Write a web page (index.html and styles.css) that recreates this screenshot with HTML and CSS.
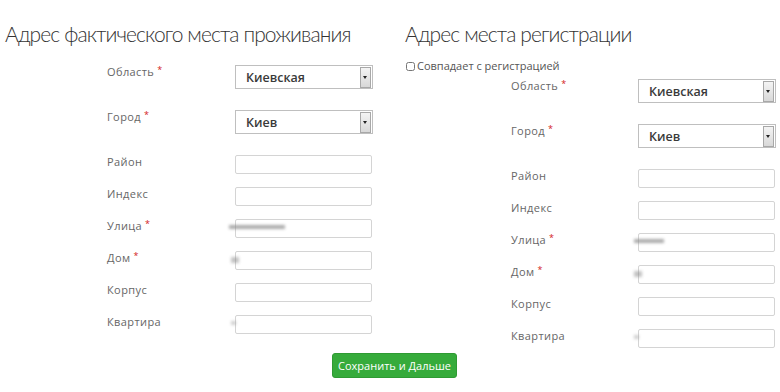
FILE: index.html
```html
<!DOCTYPE html>
<html lang="ru">
<head>
  <meta charset="UTF-8">
  <title>Адрес</title>
  <link rel="stylesheet" href="styles.css">
</head>
<body>
  <div class="columns">
    <div class="col col-live">
      <h2>Адрес фактического места проживания</h2>
      <div class="fields">
        <div class="row row-select">
          <label>Область<span class="req">*</span></label>
          <div class="select"><span>Киевская</span><i class="arrow"></i></div>
        </div>
        <div class="row row-select">
          <label>Город<span class="req">*</span></label>
          <div class="select"><span>Киев</span><i class="arrow"></i></div>
        </div>
        <div class="row">
          <label>Район</label>
          <input type="text">
        </div>
        <div class="row">
          <label>Индекс</label>
          <input type="text">
        </div>
        <div class="row">
          <label>Улица<span class="req">*</span></label>
          <div class="filled"><input type="text"><span class="blur blur-long"></span></div>
        </div>
        <div class="row">
          <label>Дом<span class="req">*</span></label>
          <div class="filled"><input type="text"><span class="blur blur-short"></span></div>
        </div>
        <div class="row">
          <label>Корпус</label>
          <input type="text">
        </div>
        <div class="row">
          <label>Квартира</label>
          <div class="filled"><input type="text"><span class="blur blur-dot"></span></div>
        </div>
      </div>
    </div>

    <div class="col col-reg">
      <h2>Адрес места регистрации</h2>
      <label class="same"><input type="checkbox"> Совпадает с регистрацией</label>
      <div class="fields">
        <div class="row row-select">
          <label>Область<span class="req">*</span></label>
          <div class="select"><span>Киевская</span><i class="arrow"></i></div>
        </div>
        <div class="row row-select">
          <label>Город<span class="req">*</span></label>
          <div class="select"><span>Киев</span><i class="arrow"></i></div>
        </div>
        <div class="row">
          <label>Район</label>
          <input type="text">
        </div>
        <div class="row">
          <label>Индекс</label>
          <input type="text">
        </div>
        <div class="row">
          <label>Улица<span class="req">*</span></label>
          <div class="filled"><input type="text"><span class="blur blur-mid"></span></div>
        </div>
        <div class="row">
          <label>Дом<span class="req">*</span></label>
          <div class="filled"><input type="text"><span class="blur blur-short"></span></div>
        </div>
        <div class="row">
          <label>Корпус</label>
          <input type="text">
        </div>
        <div class="row">
          <label>Квартира</label>
          <div class="filled"><input type="text"><span class="blur blur-dot"></span></div>
        </div>
      </div>
    </div>
  </div>

  <div class="actions">
    <button class="save">Сохранить и Дальше</button>
  </div>
</body>
</html>
```

FILE: styles.css
```css
body {
  margin: 0;
  background-color: #fff;
  font-family: "Open Sans", Arial, sans-serif;
  color: #444;
}
.columns {
  display: flex;
  padding-top: 21px;
}
.col {
  box-sizing: border-box;
}
.col-live {
  width: 400px;
  padding-left: 5px;
}
.col-reg {
  flex: 1;
  padding-left: 5px;
}
h2 {
  margin: 0;
  font-family: "Lato", Arial, sans-serif;
  font-weight: 300;
  font-size: 21px;
  letter-spacing: -0.9px;
  line-height: 26px;
  color: #333;
}
.col-live .fields {
  margin-top: 18px;
  margin-left: 102px;
}
.col-reg .fields {
  margin-top: 5px;
  margin-left: 106px;
}
.same {
  display: flex;
  align-items: center;
  margin-top: 11px;
  font-size: 11px;
  line-height: 16px;
  color: #555;
}
.same input {
  margin: 0 2px 0 1px;
  width: 9px;
  height: 9px;
}
.row {
  display: flex;
  align-items: flex-start;
  margin-bottom: 13px;
}
.row:last-child {
  margin-bottom: 0;
}
.row-select {
  margin-bottom: 21px;
}
.row label {
  width: 128px;
  font-size: 11px;
  letter-spacing: 0.4px;
  line-height: 14px;
  color: #666;
}
.col-reg .row label {
  width: 127px;
}
.req {
  color: #d32020;
  font-size: 9px;
  position: relative;
  top: -3px;
  margin-left: 3px;
}
.select {
  box-sizing: border-box;
  width: 138px;
  height: 24px;
  border: 1px solid #bfbfbf;
  display: flex;
  align-items: center;
  justify-content: space-between;
  padding-left: 10px;
  font-size: 12.5px;
  font-weight: 600;
  color: #3a3a3a;
}
.arrow {
  width: 9px;
  height: 19px;
  margin-right: 1px;
  border: 1px solid #a8a8a8;
  background: linear-gradient(#f4f4f4, #d8d8d8);
  position: relative;
}
.arrow:after {
  content: "";
  position: absolute;
  left: 2px;
  top: 8px;
  border-left: 2.5px solid transparent;
  border-right: 2.5px solid transparent;
  border-top: 3px solid #222;
}
input[type="text"] {
  display: block;
  box-sizing: border-box;
  width: 137px;
  height: 19px;
  margin: 0;
  border: 1px solid #d4d4d4;
  border-radius: 2px;
  background-color: #fff;
}
.filled {
  position: relative;
}
.blur {
  position: absolute;
  top: 6px;
  height: 4px;
  background-color: #888;
  filter: blur(1.5px);
  opacity: 0.7;
}
.blur-long {
  left: -6px;
  width: 56px;
}
.blur-mid {
  left: -4px;
  width: 30px;
}
.blur-short {
  left: -4px;
  width: 8px;
  height: 6px;
  opacity: 0.5;
}
.blur-dot {
  left: -4px;
  width: 5px;
  opacity: 0.4;
}
.actions {
  padding-top: 5px;
  padding-left: 332px;
}
.save {
  display: block;
  width: 125px;
  height: 25px;
  padding: 0;
  border: 1px solid #2f9a33;
  border-radius: 3px;
  background-color: #36ab3b;
  color: #fff;
  font-family: "Open Sans", Arial, sans-serif;
  font-size: 11px;
  cursor: pointer;
}
```
